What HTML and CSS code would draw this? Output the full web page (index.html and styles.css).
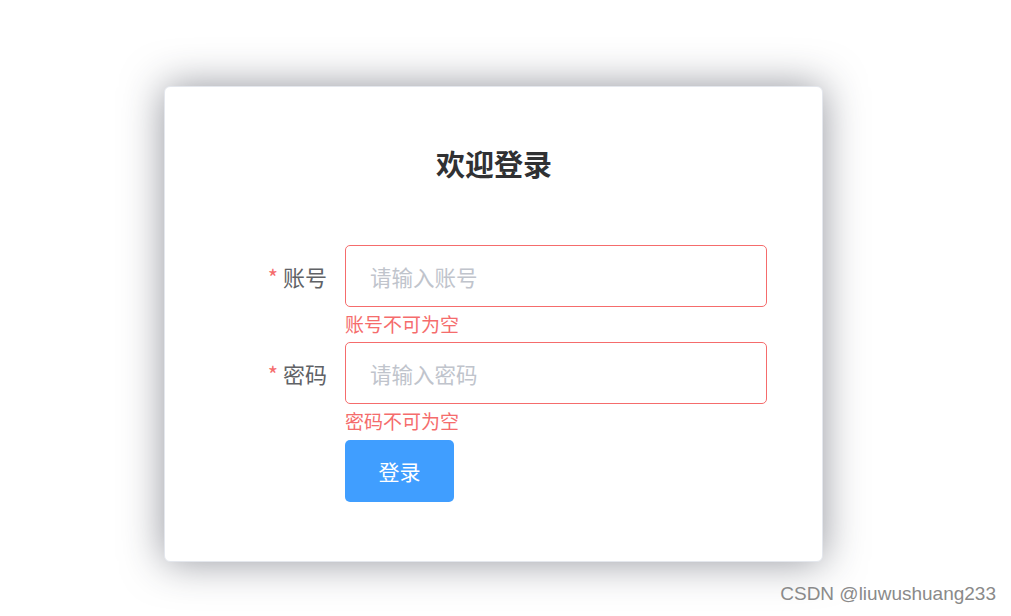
FILE: index.html
```html
<!DOCTYPE html>
<html lang="zh-CN">
<head>
    <meta charset="UTF-8">
    <meta name="viewport" content="width=device-width, initial-scale=1.0">
    <title>欢迎登录</title>
    <link rel="stylesheet" href="styles.css">
</head>
<body>
    <div class="page">
        <div class="login-box">
            <h1 class="title">欢迎登录</h1>
            <form class="login-form">
                <div class="form-item">
                    <label class="form-label" for="account"><span class="star">*</span> 账号</label>
                    <div class="form-field">
                        <input type="text" id="account" class="form-input is-error" placeholder="请输入账号">
                        <div class="form-error">账号不可为空</div>
                    </div>
                </div>
                <div class="form-item">
                    <label class="form-label" for="password"><span class="star">*</span> 密码</label>
                    <div class="form-field">
                        <input type="password" id="password" class="form-input is-error" placeholder="请输入密码">
                        <div class="form-error">密码不可为空</div>
                    </div>
                </div>
                <div class="form-item">
                    <div class="form-label"></div>
                    <div class="form-field">
                        <button type="button" class="btn-primary">登录</button>
                    </div>
                </div>
            </form>
        </div>
    </div>
    <div class="watermark">CSDN @liuwushuang233</div>
</body>
</html>
```

FILE: styles.css
```css
body {
    margin: 0;
    background: #ffffff;
    font-family: "Noto Sans CJK SC", "Noto Sans", sans-serif;
    height: 616px;
    overflow: hidden;
}
.page {
    padding-top: 86px;
    padding-left: 164px;
}
.login-box {
    width: 659px;
    box-sizing: border-box;
    background: #ffffff;
    border: 1px solid #e4e7ed;
    border-radius: 6px;
    box-shadow: 0 0 40px rgba(40, 44, 60, 0.5);
    padding: 56px 55px 59px 60px;
}
.title {
    margin: 0 0 62px;
    padding-right: 4px;
    text-align: center;
    font-size: 29px;
    line-height: 40px;
    font-weight: bold;
    color: #303133;
}
.form-item {
    display: flex;
}
.form-label {
    width: 120px;
    flex-shrink: 0;
    box-sizing: border-box;
    padding-right: 18px;
    text-align: right;
    font-size: 22px;
    line-height: 62px;
    color: #606266;
}
.star {
    color: #f56c6c;
}
.form-field {
    flex: 1;
}
.form-input {
    display: block;
    width: 100%;
    height: 62px;
    box-sizing: border-box;
    border: 1px solid #dcdfe6;
    border-radius: 5px;
    padding: 0 24px;
    font-family: inherit;
    font-size: 21.5px;
    color: #606266;
    outline: none;
}
.form-input::placeholder {
    color: #c0c4cc;
}
.form-input.is-error {
    border-color: #f56c6c;
}
.form-error {
    font-size: 19px;
    line-height: 33px;
    padding-bottom: 2px;
    color: #f56c6c;
}
.form-item:nth-child(2) .form-error {
    padding-bottom: 3px;
}
.btn-primary {
    width: 109px;
    height: 62px;
    border: none;
    border-radius: 5px;
    background: #409eff;
    color: #ffffff;
    font-family: inherit;
    font-size: 21px;
    cursor: pointer;
}
.watermark {
    position: absolute;
    right: 15px;
    top: 583px;
    font-family: "Liberation Sans", Arial, sans-serif;
    font-size: 19px;
    color: #8a8a8a;
}
```
